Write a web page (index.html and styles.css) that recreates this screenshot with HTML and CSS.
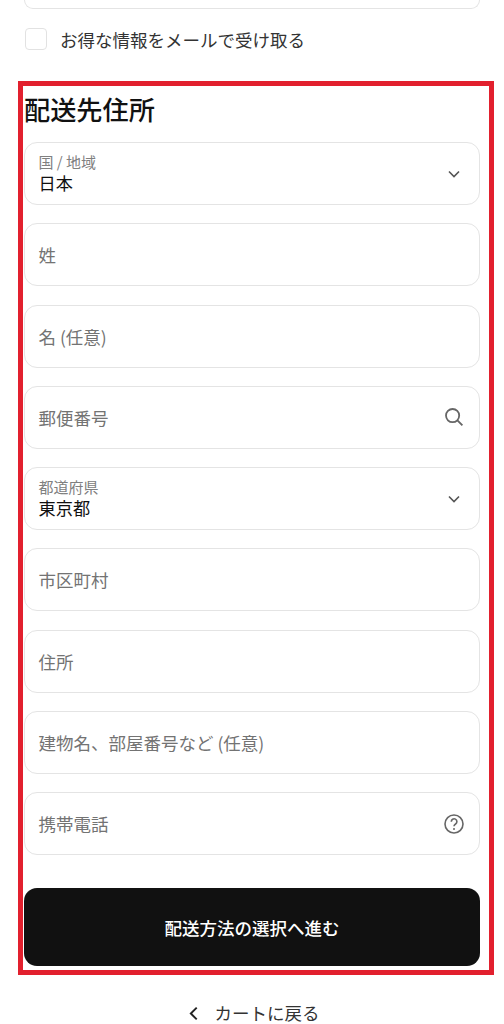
FILE: index.html
```html
<!DOCTYPE html>
<html lang="ja">
<head>
<meta charset="utf-8">
<title>配送先住所</title>
<link rel="stylesheet" href="styles.css">
</head>
<body>
<div class="page">
  <div class="prev-field"></div>
  <label class="check-row"><span class="checkbox"></span><span>お得な情報をメールで受け取る</span></label>
  <section class="highlight">
    <h2 class="title">配送先住所</h2>
    <div class="fields">
      <div class="field stacked">
        <div class="value-wrap"><div class="label">国 / 地域</div><div class="value">日本</div></div>
        <svg class="chev" viewBox="0 0 12 8"><path d="M1 1.5l5 5 5-5"/></svg>
      </div>
      <div class="field"><span class="ph">姓</span></div>
      <div class="field"><span class="ph">名 (任意)</span></div>
      <div class="field"><span class="ph">郵便番号</span>
        <svg class="icon" viewBox="0 0 20 20"><circle cx="8.6" cy="8.6" r="6.6"/><path d="M13.4 13.4l5 5"/></svg>
      </div>
      <div class="field stacked">
        <div class="value-wrap"><div class="label">都道府県</div><div class="value">東京都</div></div>
        <svg class="chev" viewBox="0 0 12 8"><path d="M1 1.5l5 5 5-5"/></svg>
      </div>
      <div class="field"><span class="ph">市区町村</span></div>
      <div class="field"><span class="ph">住所</span></div>
      <div class="field"><span class="ph">建物名、部屋番号など (任意)</span></div>
      <div class="field"><span class="ph">携帯電話</span>
        <svg class="icon help" viewBox="0 0 20 20"><circle cx="10" cy="10" r="9"/><path d="M7.3 7.7a2.8 2.8 0 1 1 4.3 2.3c-1 .7-1.6 1.2-1.6 2.3"/><circle class="dot" cx="10" cy="15" r="1"/></svg>
      </div>
    </div>
    <button class="submit" type="button">配送方法の選択へ進む</button>
  </section>
  <a class="back">
    <svg class="back-chev" viewBox="0 0 10 14"><path d="M8 1.5L2.5 7 8 12.5"/></svg>
    <span>カートに戻る</span>
  </a>
</div>
</body>
</html>
```
FILE: styles.css
```css
* { box-sizing: border-box; }
html, body { margin: 0; padding: 0; background: #fff; }
body {
  font-family: "Noto Sans CJK JP", "Noto Sans", sans-serif;
  color: #111;
  height: 1024px;
  overflow: hidden;
}
.page { padding: 0 10px 0 18px; }
.prev-field {
  height: 9px;
  margin: 0 14px 0 6px;
  border: 1.5px solid #e4e4e4;
  border-top: 0;
  border-radius: 0 0 12px 12px;
}
.check-row {
  display: flex;
  align-items: center;
  gap: 13px;
  margin: 19px 0 0 7px;
  height: 22px;
  font-size: 17.5px;
  color: #333;
}
.checkbox {
  width: 22px;
  height: 22px;
  border: 1.5px solid #e2e2e2;
  border-radius: 4px;
}
.highlight {
  margin-top: 31px;
  height: 894px;
  border: 5px solid #e2202e;
  padding: 0 9px 0 1px;
  display: flex;
  flex-direction: column;
}
.title {
  margin: 5px 0 0;
  height: 51px;
  font-size: 26.2px;
  line-height: 36px;
  font-weight: 500;
  color: #111;
}
.fields { display: flex; flex-direction: column; gap: 18.25px; }
.field {
  height: 63px;
  border: 1.5px solid #e4e4e4;
  border-radius: 13px;
  padding: 0 13.5px;
  display: flex;
  align-items: center;
  justify-content: space-between;
  font-size: 17.5px;
}
.ph { color: #737373; }
.label { font-size: 15px; line-height: 19px; margin-top: -1px; color: #808080; }
.value { font-size: 17.2px; line-height: 23px; color: #111; }
.chev { width: 12px; height: 8px; margin-right: 6px; fill: none; stroke: #555; stroke-width: 1.6; }
.icon { width: 20px; height: 20px; margin-right: 1.5px; fill: none; stroke: #666; stroke-width: 1.8; }
.icon.help { stroke-width: 1.6; }
.dot { fill: #666; stroke: none; }
.submit {
  margin-top: 33px;
  width: 456px;
  height: 78px;
  border: 0;
  border-radius: 13px;
  background: #111;
  color: #fff;
  font-family: inherit;
  font-size: 17.5px;
  font-weight: 500;
  padding: 0;
}
.back {
  margin: 25px 5px 0 0;
  display: flex;
  justify-content: center;
  align-items: center;
  gap: 16px;
  font-size: 17.5px;
  color: #333;
  line-height: 26px;
}
.back-chev { width: 11px; height: 15px; fill: none; stroke: #222; stroke-width: 1.8; }
```
